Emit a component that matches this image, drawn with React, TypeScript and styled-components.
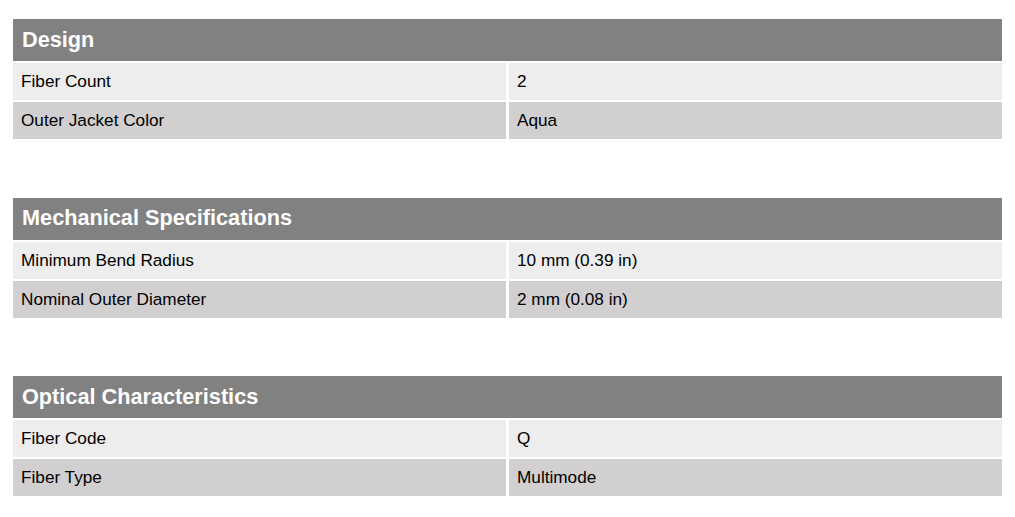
import { createGlobalStyle } from 'styled-components';
import styled from 'styled-components';

const GlobalStyle = createGlobalStyle`
  body {
    margin: 0;
    background: #ffffff;
    font-family: 'Liberation Sans', Arial, sans-serif;
  }
`;

const Page = styled.div`
  display: flex;
  flex-direction: column;
  gap: 58.5px;
  padding: 19px 13px 0 13px;
  width: 989px;
`;

const Section = styled.div`
  display: grid;
  grid-template-columns: 493px 493px;
  column-gap: 3px;
  row-gap: 2px;
`;

const Header = styled.div`
  grid-column: 1 / span 2;
  height: 42px;
  display: flex;
  align-items: center;
  padding: 0 9px 1px 9px;
  box-sizing: border-box;
  background: #818181;
  color: #ffffff;
  font-size: 21.7px;
  font-weight: bold;
`;

const Cell = styled.div<{ shade: 'light' | 'dark' }>`
  height: 37px;
  display: flex;
  align-items: center;
  padding: 0 8px;
  box-sizing: border-box;
  background: ${(props) => (props.shade === 'light' ? '#ededed' : '#d1cfd0')};
  color: #000000;
  font-size: 17.2px;
`;

interface Spec {
  title: string;
  rows: [string, string][];
}

const specs: Spec[] = [
  {
    title: 'Design',
    rows: [
      ['Fiber Count', '2'],
      ['Outer Jacket Color', 'Aqua'],
    ],
  },
  {
    title: 'Mechanical Specifications',
    rows: [
      ['Minimum Bend Radius', '10 mm (0.39 in)'],
      ['Nominal Outer Diameter', '2 mm (0.08 in)'],
    ],
  },
  {
    title: 'Optical Characteristics',
    rows: [
      ['Fiber Code', 'Q'],
      ['Fiber Type', 'Multimode'],
    ],
  },
];

export default function App() {
  return (
    <>
      <GlobalStyle />
      <Page>
        {specs.map((spec) => (
          <Section key={spec.title}>
            <Header>{spec.title}</Header>
            {spec.rows.map(([label, value], index) => {
              const shade = index % 2 === 0 ? 'light' : 'dark';
              return [
                <Cell key={label} shade={shade}>
                  {label}
                </Cell>,
                <Cell key={label + '-value'} shade={shade}>
                  {value}
                </Cell>,
              ];
            })}
          </Section>
        ))}
      </Page>
    </>
  );
}
